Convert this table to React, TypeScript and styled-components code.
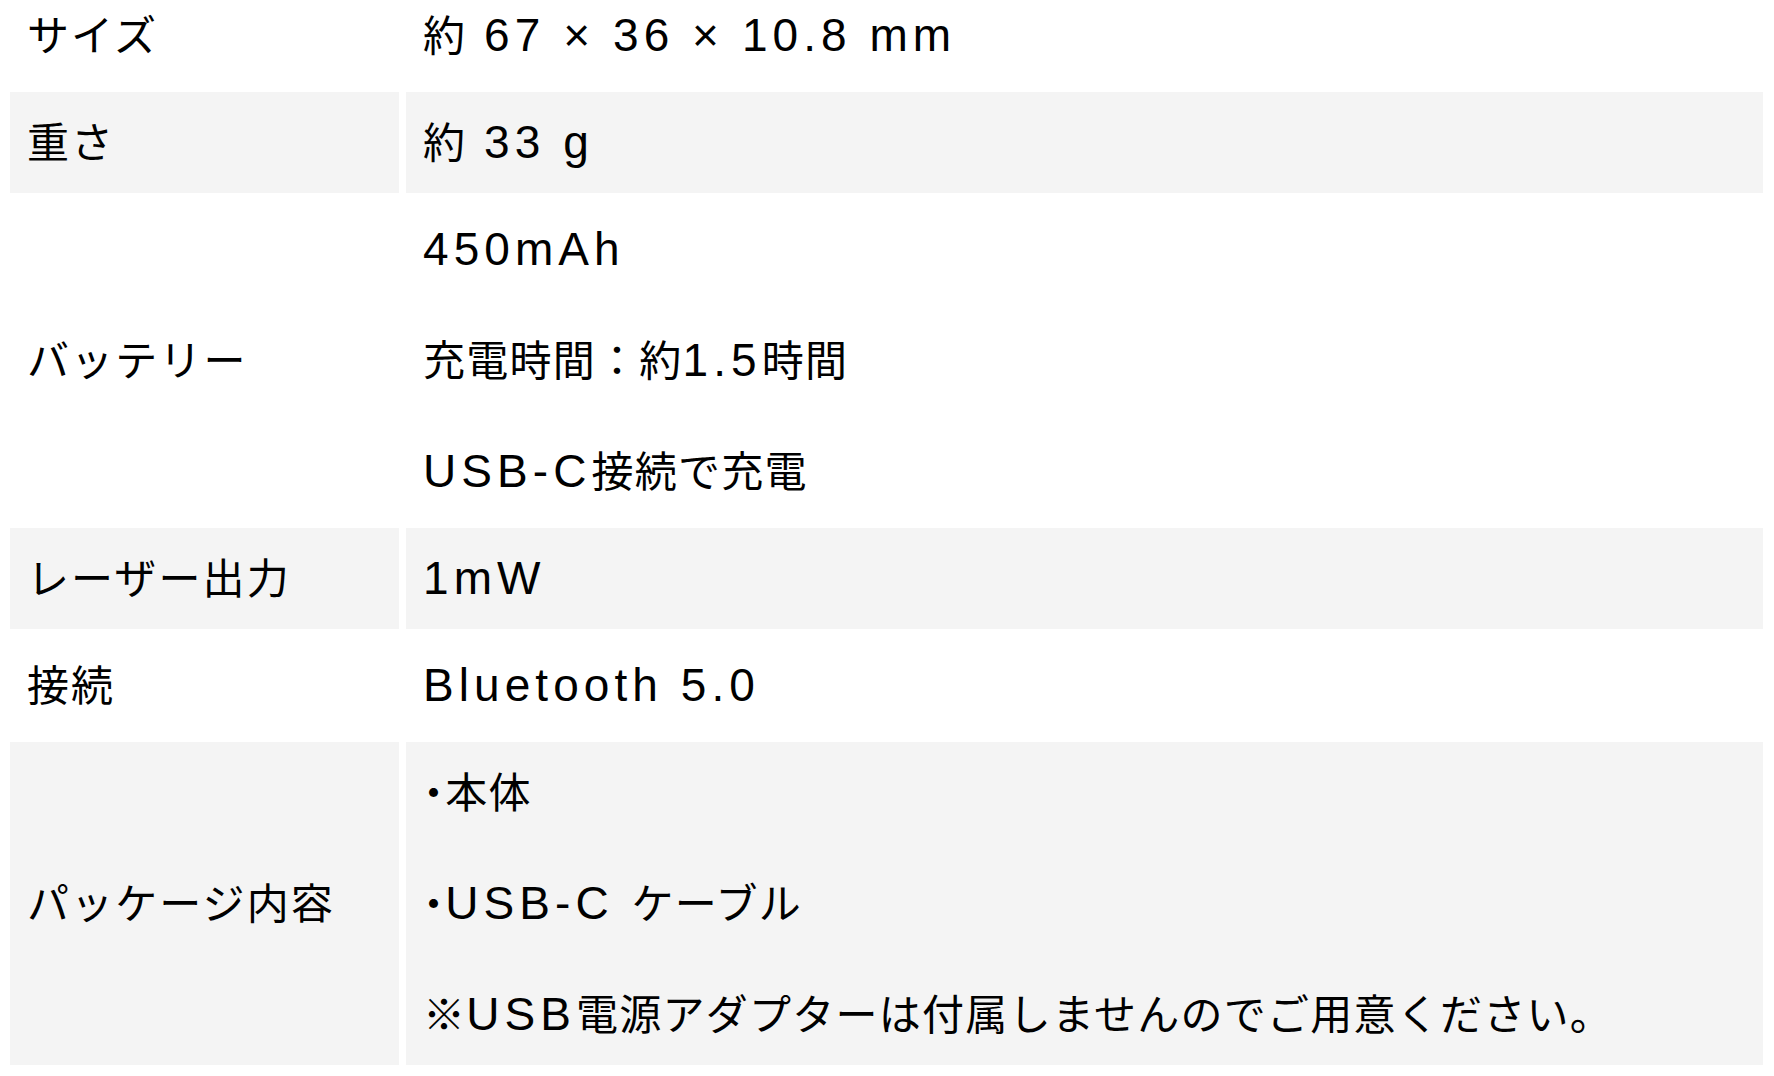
import { FC, ReactNode } from "react";
import styled, { createGlobalStyle } from "styled-components";

const GlobalStyle = createGlobalStyle`
  html,
  body {
    margin: 0;
    padding: 0;
    background: #ffffff;
  }

  body {
    font-family: "Noto Sans CJK JP", "Liberation Sans", sans-serif;
    color: #000000;
    -webkit-font-smoothing: antialiased;
  }
`;

// the page is captured a little scrolled, so the first row is cut at the top
const SpecSheet = styled.div`
  margin-top: -15px;
  padding: 0 11px 0 10px;
  display: flex;
  flex-direction: column;
  gap: 6px;
`;

const SpecRow = styled.div`
  display: grid;
  grid-template-columns: 389px 1fr;
  column-gap: 7px;
`;

const Cell = styled.div<{ $shaded: boolean }>`
  background: ${({ $shaded }) => ($shaded ? "#f4f4f4" : "#ffffff")};
  padding: 16px 17px 22px;
  display: flex;
  flex-direction: column;
  justify-content: center;
  font-size: 42px;
  line-height: 63px;
`;

const LabelCell = styled(Cell)`
  letter-spacing: 0.05em;
`;

const ValueCell = styled(Cell)`
  gap: 48px;
  letter-spacing: 0.03em;
`;

const Line = styled.p`
  margin: 0;
  height: 63px;
  white-space: nowrap;
`;

// latin runs are set wider and more open than the kana around them
const Latin = styled.span`
  font-family: "Liberation Sans", sans-serif;
  font-size: 46px;
  line-height: 1;
  letter-spacing: 0.11em;
`;

const Narrow = styled.span`
  font-feature-settings: "palt";
`;

type Spec = {
  label: string;
  values: string[];
};

const specs: Spec[] = [
  { label: "サイズ", values: ["約 67 × 36 × 10.8 mm"] },
  { label: "重さ", values: ["約 33 g"] },
  { label: "バッテリー", values: ["450mAh", "充電時間：約1.5時間", "USB-C接続で充電"] },
  { label: "レーザー出力", values: ["1mW"] },
  { label: "接続", values: ["Bluetooth 5.0"] },
  {
    label: "パッケージ内容",
    values: ["・本体", "・USB-C ケーブル", "※USB電源アダプターは付属しませんのでご用意ください。"],
  },
];

const setText = (text: string): ReactNode[] =>
  text
    .split(/([A-Za-z0-9.×\- ]+|・)/)
    .filter((part) => part !== "")
    .map((part, i) => {
      if (part === "・") return <Narrow key={i}>{part}</Narrow>;
      if (/^[A-Za-z0-9.×\- ]+$/.test(part)) return <Latin key={i}>{part}</Latin>;
      return part;
    });

const App: FC = () => {
  return (
    <>
      <GlobalStyle />
      <SpecSheet>
        {specs.map((spec, i) => (
          <SpecRow key={spec.label}>
            <LabelCell $shaded={i % 2 === 1}>{spec.label}</LabelCell>
            <ValueCell $shaded={i % 2 === 1}>
              {spec.values.map((value) => (
                <Line key={value}>{setText(value)}</Line>
              ))}
            </ValueCell>
          </SpecRow>
        ))}
      </SpecSheet>
    </>
  );
};

export default App;
